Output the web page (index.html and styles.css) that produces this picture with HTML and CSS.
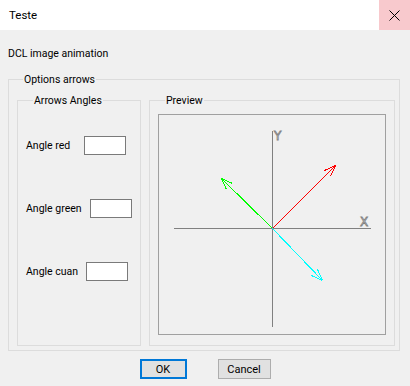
FILE: index.html
```html
<!DOCTYPE html>
<html lang="en">
<head>
<meta charset="utf-8">
<title>Teste</title>
<link rel="stylesheet" href="styles.css">
</head>
<body>
<div class="window">
	<div class="titlebar">
		<span class="title">Teste</span>
		<div class="close">
			<svg width="11" height="11" viewBox="0 0 11 11"><path d="M0.5 0.5 L10.5 10.5 M10.5 0.5 L0.5 10.5" stroke="#000" stroke-width="1" fill="none"/></svg>
		</div>
	</div>
	<div class="dialog">
		<p class="caption">DCL image animation</p>
		<fieldset class="group outer">
			<legend>Options arrows</legend>
			<div class="columns">
				<fieldset class="group angles">
					<legend>Arrows Angles</legend>
					<div class="field"><label class="lbl-red">Angle red</label><span class="edit"></span></div>
					<div class="field"><label class="lbl-green">Angle green</label><span class="edit"></span></div>
					<div class="field"><label class="lbl-cuan">Angle cuan</label><span class="edit"></span></div>
				</fieldset>
				<fieldset class="group preview">
					<legend>Preview</legend>
					<div class="canvas">
						<svg width="226" height="219" viewBox="0 0 226 219" shape-rendering="crispEdges">
							<!-- axes -->
							<line x1="113.5" y1="16" x2="113.5" y2="212" stroke="#808080"/>
							<line x1="15" y1="113.5" x2="212" y2="113.5" stroke="#808080"/>
							<text class="axis" x="115" y="25">Y</text>
							<text class="axis" x="201" y="111">X</text>
							<!-- red -->
							<g stroke="#ff0000" fill="none">
								<line x1="113.5" y1="113.5" x2="176.5" y2="50.5"/>
								<line x1="176.5" y1="50.5" x2="165.5" y2="55.5"/>
								<line x1="176.5" y1="50.5" x2="171.5" y2="61.5"/>
								<line x1="174.5" y1="51.5" x2="167.5" y2="54.5"/>
								<line x1="175.5" y1="52.5" x2="172.5" y2="59.5"/>
							</g>
							<!-- green -->
							<g stroke="#00ff00" fill="none">
								<line x1="113.5" y1="113.5" x2="62.5" y2="63.5"/>
								<line x1="62.5" y1="63.5" x2="67.5" y2="74.5"/>
								<line x1="62.5" y1="63.5" x2="73.5" y2="68.5"/>
								<line x1="63.5" y1="65.5" x2="66.5" y2="72.5"/>
								<line x1="64.5" y1="64.5" x2="71.5" y2="67.5"/>
							</g>
							<!-- cyan -->
							<g stroke="#00ffff" fill="none">
								<line x1="113.5" y1="113.5" x2="163.5" y2="165.5"/>
								<line x1="163.5" y1="165.5" x2="158.5" y2="154.5"/>
								<line x1="163.5" y1="165.5" x2="152.5" y2="160.5"/>
								<line x1="162.5" y1="163.5" x2="159.5" y2="156.5"/>
								<line x1="161.5" y1="164.5" x2="154.5" y2="161.5"/>
							</g>
						</svg>
					</div>
				</fieldset>
			</div>
		</fieldset>
		<div class="buttons">
			<button class="btn default">OK</button>
			<button class="btn">Cancel</button>
		</div>
	</div>
</div>
</body>
</html>
```

FILE: styles.css
```css
body {
	margin: 0;
	background: #f0f0f0;
	font-family: Roboto, "Liberation Sans", sans-serif;
	font-size: 10.5px;
	color: #000;
}

.window {
	width: 410px;
	height: 386px;
	overflow: hidden;
}

.titlebar {
	height: 30px;
	background: #fff;
	display: flex;
	align-items: center;
	justify-content: space-between;
}
.title {
	padding-left: 9px;
	font-size: 11.5px;
}
.close {
	width: 31px;
	height: 30px;
	background: #f8c9cd;
	display: flex;
	align-items: center;
	justify-content: center;
}

.dialog {
	padding: 0 10px 0 8px;
}
.caption {
	margin: 16px 0 0 0;
	line-height: 15px;
}

.group {
	margin: 0;
	padding: 0;
	border: 1px solid #dcdcdc;
	min-width: 0;
}
.group legend {
	padding: 0 1px;
	line-height: 15px;
}

.outer {
	margin-top: 11px;
	padding: 0 4px 4px 8px;
}
.outer > legend {
	margin-left: 6px;
}

.columns {
	display: flex;
	gap: 8px;
	margin-top: 6px;
}

.angles {
	width: 124px;
	height: 253px;
	padding: 28px 0 0 8px;
	box-sizing: border-box;
	display: flex;
	flex-direction: column;
	gap: 44px;
}
.angles > legend,
.preview > legend {
	margin-left: 7px;
}

.field {
	display: flex;
	align-items: center;
	height: 19px;
}
.field label {
	margin-right: 10px;
}
.field .lbl-red {
	margin-right: 14px;
}
.field .lbl-green {
	margin-right: 8px;
}
.field .lbl-cuan {
	margin-right: 8px;
}
.edit {
	width: 42px;
	height: 19px;
	box-sizing: border-box;
	border: 1px solid #7a7a7a;
	background: #fff;
}

.preview {
	width: 246px;
	height: 253px;
	box-sizing: border-box;
	padding: 6px 0 0 8px;
}
.canvas {
	width: 228px;
	height: 221px;
	box-sizing: border-box;
	border: 1px solid #a0a0a0;
}
.canvas svg {
	display: block;
}
.axis {
	font-family: "DejaVu Sans", sans-serif;
	font-size: 12px;
	fill: #f0f0f0;
	stroke: #808080;
	stroke-width: 0.8;
}

.buttons {
	display: flex;
	justify-content: center;
	gap: 31px;
	margin-top: 8px;
	padding-left: 2px;
}
.btn {
	height: 20px;
	padding: 0;
	box-sizing: border-box;
	background: #e1e1e1;
	border: 1px solid #adadad;
	font-family: inherit;
	font-size: 11px;
	color: #000;
}
.btn.default {
	width: 47px;
	border: 2px solid #0078d7;
}
.btn:not(.default) {
	width: 53px;
}
```
